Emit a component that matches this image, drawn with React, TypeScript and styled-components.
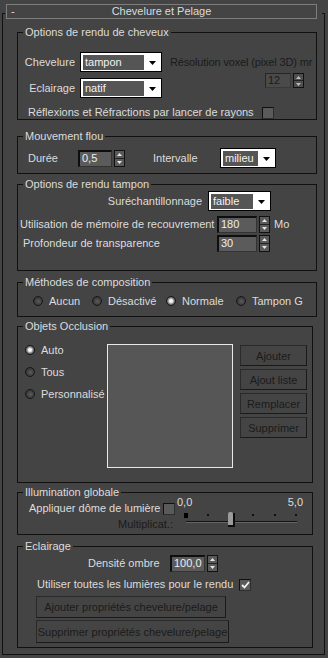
import React from "react";
import styled, { createGlobalStyle, css } from "styled-components";

const GlobalStyle = createGlobalStyle`
  *, *::before, *::after { box-sizing: border-box; }
  html, body { margin: 0; padding: 0; background: #444444; }
  body {
    font-family: "Liberation Sans", Arial, sans-serif;
    font-size: 11px;
    color: #dcdcdc;
  }
`;

const DIM = "#1b1b1b";

const Panel = styled.div`
  width: 328px;
  height: 658px;
  padding-top: 4px;
  overflow: hidden;
  background: #444444;
`;

const RolloutHeader = styled.div`
  display: grid;
  grid-template-columns: 1fr auto 1fr;
  align-items: center;
  margin-left: 6px;
  width: 311px;
  height: 15px;
  border: 1px solid #7d7d7d;
  line-height: 13px;
`;

const CollapseSign = styled.span`
  padding-left: 4px;
`;

const RolloutBody = styled.div`
  position: relative;
  margin: -6px 0 0 2px;
  width: 323px;
  padding: 13px 0 6px 14px;
  border: 1px solid #111111;
  border-top: 0;
  &::before,
  &::after {
    content: "";
    position: absolute;
    top: 0;
    width: 3px;
    height: 1px;
    background: #111111;
  }
  &::before { left: -1px; }
  &::after { right: -1px; }
`;

const Group = styled.fieldset<{ $h: number; $w?: number; $mt?: number }>`
  display: block;
  margin: ${(p) => p.$mt ?? 0}px 0 0;
  padding: 0;
  min-width: 0;
  width: ${(p) => p.$w ?? 300}px;
  height: ${(p) => p.$h}px;
  border: 1px solid #111111;
`;

const GroupTitle = styled.legend`
  margin-left: 5px;
  padding: 0 2px;
  height: 13px;
  line-height: 13px;
  white-space: nowrap;
`;

const Row = styled.div<{ $mt?: number; $pl?: number; $h: number; $gap?: number }>`
  display: flex;
  align-items: center;
  margin-top: ${(p) => p.$mt ?? 0}px;
  padding-left: ${(p) => p.$pl ?? 0}px;
  height: ${(p) => p.$h}px;
  gap: ${(p) => p.$gap ?? 0}px;
`;

const Label = styled.span<{ $w?: number; $right?: boolean; $ml?: number }>`
  flex: none;
  white-space: nowrap;
  line-height: 13px;
  ${(p) => p.$w !== undefined && css`width: ${p.$w}px;`}
  ${(p) => p.$right && css`text-align: right;`}
  ${(p) => p.$ml !== undefined && css`margin-left: ${p.$ml}px;`}
`;

/* ---------- first group grid ---------- */
const HairGrid = styled.div`
  display: grid;
  grid-template-columns: 62px 90px 1fr;
  grid-template-rows: 20px 20px;
  row-gap: 6px;
  align-items: center;
  padding-top: 13px;
`;

const FieldLabel = styled.span`
  text-align: right;
  padding-right: 5px;
  white-space: nowrap;
`;

const VoxelLabel = styled.span`
  white-space: nowrap;
  color: ${DIM};
  letter-spacing: -0.15px;
`;

const VoxelSpin = styled.div`
  justify-self: end;
  align-self: start;
  margin: -5px 12px 0 0;
`;

/* ---------- dropdown ---------- */
const SelectBox = styled.div<{ $w: number }>`
  flex: none;
  display: flex;
  width: ${(p) => p.$w}px;
  height: 20px;
  border: 1px solid #000000;
  background: #ffffff;
  padding: 2px 0 1px 2px;
`;

const SelectValue = styled.span`
  flex: 1;
  background: #555555;
  color: #f2f2f2;
  line-height: 15px;
  padding-left: 2px;
  white-space: nowrap;
  overflow: hidden;
`;

const SelectArrow = styled.span`
  width: 17px;
  display: flex;
  align-items: center;
  justify-content: center;
`;

const Dropdown = ({ w, value }: { w: number; value: string }) => (
  <SelectBox $w={w}>
    <SelectValue>{value}</SelectValue>
    <SelectArrow>
      <svg width="7" height="4" viewBox="0 0 7 4">
        <path d="M0 0H7L3.5 4Z" fill="#000" />
      </svg>
    </SelectArrow>
  </SelectBox>
);

/* ---------- spinner ---------- */
const SpinnerBox = styled.div<{ $h: number }>`
  flex: none;
  display: flex;
  gap: 2px;
  height: ${(p) => p.$h}px;
`;

const SpinField = styled.span<{ $w: number; $dim?: boolean }>`
  width: ${(p) => p.$w}px;
  height: 100%;
  background: #5b5b5b;
  color: #eeeeee;
  border-style: solid;
  border-width: 2px 1px 1px 2px;
  border-color: #0e0e0e #333333 #333333 #0e0e0e;
  padding-left: 2px;
  line-height: 13px;
  white-space: nowrap;
  ${(p) =>
    p.$dim &&
    css`
      background: #4a4a4a;
      color: ${DIM};
      border-width: 1px;
      border-color: #262626 #3a3a3a #3a3a3a #262626;
      line-height: 13px;
    `}
`;

const SpinButtons = styled.span<{ $dim?: boolean }>`
  display: flex;
  flex-direction: column;
  width: 11px;
  height: 100%;
  border: 1px solid #111111;
  background: ${(p) => (p.$dim ? "#4e4e4e" : "#5a5a5a")};
`;

const SpinHalf = styled.span`
  flex: 1;
  display: flex;
  align-items: center;
  justify-content: center;
  & + & {
    border-top: 1px solid #222222;
  }
`;

const Spinner = ({ w, value, h = 17, dim }: { w: number; value: string; h?: number; dim?: boolean }) => (
  <SpinnerBox $h={h}>
    <SpinField $w={w} $dim={dim}>
      {value}
    </SpinField>
    <SpinButtons $dim={dim}>
      <SpinHalf>
        <svg width="5" height="3" viewBox="0 0 5 3">
          <path d="M0 3H5L2.5 0Z" fill={dim ? "#bdbdbd" : "#e6e6e6"} />
        </svg>
      </SpinHalf>
      <SpinHalf>
        <svg width="5" height="3" viewBox="0 0 5 3">
          <path d="M0 0H5L2.5 3Z" fill={dim ? "#bdbdbd" : "#e6e6e6"} />
        </svg>
      </SpinHalf>
    </SpinButtons>
  </SpinnerBox>
);

/* ---------- checkbox / radio ---------- */
const CheckBox = styled.span<{ $mla?: boolean; $mr?: number }>`
  flex: none;
  width: 12px;
  height: 12px;
  display: flex;
  align-items: center;
  justify-content: center;
  border: 1px solid #101010;
  border-right-color: #2e2e2e;
  border-bottom-color: #2e2e2e;
  background: #5a5a5a;
  ${(p) => p.$mla && css`margin-left: auto;`}
  margin-right: ${(p) => p.$mr ?? 0}px;
`;

const Check = ({ on, mla, mr }: { on?: boolean; mla?: boolean; mr?: number }) => (
  <CheckBox $mla={mla} $mr={mr}>
    {on && (
      <svg width="9" height="8" viewBox="0 0 9 8">
        <path d="M1 4L3.5 6.5L8 1" stroke="#f2f2f2" strokeWidth="1.8" fill="none" />
      </svg>
    )}
  </CheckBox>
);

const RadioDot = styled.span<{ $on?: boolean }>`
  flex: none;
  width: 10px;
  height: 10px;
  border-radius: 50%;
  border: 1px solid #171717;
  background: radial-gradient(circle at 55% 55%, #5c5c5c 0, #3d3d3d 55%, #2a2a2a 100%);
  ${(p) =>
    p.$on &&
    css`
      background: radial-gradient(circle at 50% 50%, #ffffff 0, #ececec 28%, #8c8c8c 52%, #333333 90%);
    `}
`;

const RadioItem = styled.span`
  display: flex;
  align-items: center;
  gap: 6px;
  height: 12px;
  white-space: nowrap;
  line-height: 13px;
`;

const Radio = ({ on, label }: { on?: boolean; label: string }) => (
  <RadioItem>
    <RadioDot $on={on} />
    {label}
  </RadioItem>
);

/* ---------- buttons ---------- */
const PanelButton = styled.button<{ $w: number; $h: number; $ml?: number; $mt?: number }>`
  display: block;
  flex: none;
  width: ${(p) => p.$w}px;
  height: ${(p) => p.$h}px;
  margin: ${(p) => p.$mt ?? 0}px 0 0 ${(p) => p.$ml ?? 0}px;
  padding: 0;
  font-family: inherit;
  font-size: 11px;
  color: ${DIM};
  background: #444444;
  border: 1px solid #2a2a2a;
  border-right-color: #1a1a1a;
  border-bottom-color: #1a1a1a;
  white-space: nowrap;
`;

/* ---------- composition ---------- */
const CompositionRow = styled.div`
  display: grid;
  grid-template-columns: 59px 74px 70px auto;
  align-items: center;
  margin-top: 6px;
  padding-left: 15px;
  height: 12px;
`;

/* ---------- occlusion ---------- */
const OcclusionBody = styled.div`
  display: flex;
  margin-top: 11px;
`;

const OcclusionModes = styled.div`
  flex: none;
  width: 89px;
  padding-left: 7px;
  display: flex;
  flex-direction: column;
  gap: 10px;
`;

const ObjectList = styled.div`
  flex: none;
  width: 126px;
  height: 124px;
  border: 1px solid #e8e8e8;
  background: #565656;
`;

const ButtonStack = styled.div`
  margin: 1px 0 0 7px;
  display: flex;
  flex-direction: column;
  gap: 3px;
`;

/* ---------- global illumination ---------- */
const GIBody = styled.div`
  display: flex;
`;

const GILeft = styled.div`
  flex: none;
  width: 159px;
  padding-top: 3px;
  display: flex;
  flex-direction: column;
  gap: 3px;
`;

const MultiplierLabel = styled.span`
  align-self: flex-end;
  padding-right: 4px;
  line-height: 13px;
  color: ${DIM};
  white-space: nowrap;
`;

const SliderBlock = styled.div`
  flex: none;
  width: 128px;
  margin-top: -3px;
  display: flex;
  flex-direction: column;
`;

const SliderScale = styled.div`
  display: flex;
  justify-content: space-between;
  height: 12px;
  line-height: 12px;
  padding-right: 2px;
`;

const SliderTrack = () => (
  <svg width="128" height="19" viewBox="0 0 128 19">
    <rect x="7" y="5" width="4" height="5" fill="#000" />
    {[30, 53, 75, 97, 118].map((x) => (
      <rect key={x} x={x} y="6" width="2" height="2" fill="#101010" />
    ))}
    <rect x="9" y="13" width="111" height="1" fill="#141414" />
    <rect x="9" y="14" width="111" height="1" fill="#656565" />
    <path d="M51 6Q51 4 53 4H54Q56 4 56 6V17H51Z" fill="#9b9b9b" />
    <rect x="56" y="5" width="2" height="14" fill="#0c0c0c" />
    <rect x="51" y="17" width="7" height="2" fill="#0c0c0c" />
  </svg>
);

export default function App() {
  return (
    <>
      <GlobalStyle />
      <Panel>
        <RolloutHeader>
          <CollapseSign>-</CollapseSign>
          <span>Chevelure et Pelage</span>
          <span />
        </RolloutHeader>
        <RolloutBody>
          <Group $h={94}>
            <GroupTitle>Options de rendu de cheveux</GroupTitle>
            <HairGrid>
              <FieldLabel>Chevelure</FieldLabel>
              <Dropdown w={82} value="tampon" />
              <VoxelLabel>Résolution voxel (pixel 3D) mr</VoxelLabel>
              <FieldLabel>Eclairage</FieldLabel>
              <Dropdown w={82} value="natif" />
              <VoxelSpin>
                <Spinner w={26} h={15} value="12" dim />
              </VoxelSpin>
            </HairGrid>
            <Row $mt={8} $pl={10} $h={13} $gap={8}>
              <Label>Réflexions et Réfractions par lancer de rayons</Label>
              <Check />
            </Row>
          </Group>

          <Group $h={44} $mt={10}>
            <GroupTitle>Mouvement flou</GroupTitle>
            <Row $mt={5} $pl={10} $h={20}>
              <Label $w={50}>Durée</Label>
              <Spinner w={34} value="0,5" />
              <Label $w={67} $ml={28}>
                Intervalle
              </Label>
              <Dropdown w={56} value="milieu" />
            </Row>
          </Group>

          <Group $h={93} $mt={4}>
            <GroupTitle>Options de rendu tampon</GroupTitle>
            <Row $h={20} $gap={6}>
              <Label $w={184} $right>
                Suréchantillonnage
              </Label>
              <Dropdown w={63} value="faible" />
            </Row>
            <Row $mt={5} $pl={2} $h={17}>
              <Label $w={197}>Utilisation de mémoire de recouvrement</Label>
              <Spinner w={40} value="180" />
              <Label $ml={4}>Mo</Label>
            </Row>
            <Row $mt={2} $pl={5} $h={17}>
              <Label $w={194}>Profondeur de transparence</Label>
              <Spinner w={40} value="30" />
            </Row>
          </Group>

          <Group $h={41} $mt={5}>
            <GroupTitle>Méthodes de composition</GroupTitle>
            <CompositionRow>
              <Radio label="Aucun" />
              <Radio label="Désactivé" />
              <Radio label="Normale" on />
              <Radio label="Tampon G" />
            </CompositionRow>
          </Group>

          <Group $h={163} $mt={3} $w={296}>
            <GroupTitle>Objets Occlusion</GroupTitle>
            <OcclusionBody>
              <OcclusionModes>
                <Radio label="Auto" on />
                <Radio label="Tous" />
                <Radio label="Personnalisé" />
              </OcclusionModes>
              <ObjectList />
              <ButtonStack>
                <PanelButton $w={67} $h={21}>Ajouter</PanelButton>
                <PanelButton $w={67} $h={21}>Ajout liste</PanelButton>
                <PanelButton $w={67} $h={21}>Remplacer</PanelButton>
                <PanelButton $w={67} $h={21}>Supprimer</PanelButton>
              </ButtonStack>
            </OcclusionBody>
          </Group>

          <Group $h={49} $mt={3} $w={296}>
            <GroupTitle>Illumination globale</GroupTitle>
            <GIBody>
              <GILeft>
                <Row $pl={11} $h={13}>
                  <Label>Appliquer dôme de lumière</Label>
                  <Check mla mr={2} />
                </Row>
                <MultiplierLabel>Multiplicat.:</MultiplierLabel>
              </GILeft>
              <SliderBlock>
                <SliderScale>
                  <span>0,0</span>
                  <span>5,0</span>
                </SliderScale>
                <SliderTrack />
              </SliderBlock>
            </GIBody>
          </Group>

          <Group $h={108} $mt={5} $w={296}>
            <GroupTitle>Eclairage</GroupTitle>
            <Row $mt={2} $pl={70} $h={17}>
              <Label $w={82}>Densité ombre</Label>
              <Spinner w={35} value="100,0" />
            </Row>
            <Row $mt={6} $pl={19} $h={13} $gap={6}>
              <Label>Utiliser toutes les lumières pour le rendu</Label>
              <Check on />
            </Row>
            <PanelButton $w={190} $h={22} $ml={18} $mt={5}>
              Ajouter propriétés chevelure/pelage
            </PanelButton>
            <PanelButton $w={193} $h={23} $ml={18} $mt={2}>
              Supprimer propriétés chevelure/pelage
            </PanelButton>
          </Group>
        </RolloutBody>
      </Panel>
    </>
  );
}
